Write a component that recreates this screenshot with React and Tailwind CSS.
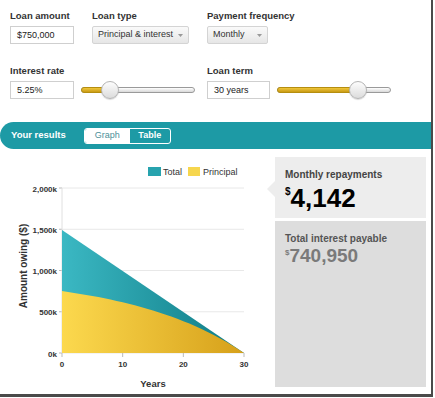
import React from 'react';

const P = 750000;
const r = 0.0525 / 12;
const n = 360;
const g = Math.pow(1 + r, n);
const pay = (P * r * g) / (g - 1);

const X = (t) => 62 + (t * 182) / 30;
const Y = (v) => 353 - (v / 2000000) * 165;

function Chart() {
  const years = Array.from({ length: 31 }, (_, i) => i);
  const principal = years.map((t) => {
    const k = t * 12;
    return (P * (g - Math.pow(1 + r, k))) / (g - 1);
  });
  const pPath =
    'M' + years.map((t, i) => `${X(t).toFixed(1)},${Y(principal[i]).toFixed(1)}`).join(' L') + ` L${X(30)},${Y(0)} L${X(0)},${Y(0)} Z`;
  const tPath = `M${X(0)},${Y(pay * n)} L${X(30)},${Y(0)} L${X(0)},${Y(0)} Z`;
  const ticks = [0, 500000, 1000000, 1500000, 2000000];
  const labels = ['0k', '500k', '1,000k', '1,500k', '2,000k'];

  return (
    <svg width="270" height="244" viewBox="0 149 270 244" className="shrink-0">
      <defs>
        <linearGradient id="gt" x1="0" x2="1" y1="0" y2="0">
          <stop offset="0" stopColor="#3bb8c3" />
          <stop offset="1" stopColor="#0e7a84" />
        </linearGradient>
        <linearGradient id="gp" x1="0" x2="1" y1="0" y2="0">
          <stop offset="0" stopColor="#fcd94e" />
          <stop offset="1" stopColor="#d6a01a" />
        </linearGradient>
      </defs>

      <rect x="148" y="167" width="13" height="9" fill="#27a3ae" />
      <text x="163" y="175" fontSize="9" fill="#333">Total</text>
      <rect x="188" y="167" width="12" height="9" fill="#f6d64e" />
      <text x="203" y="175" fontSize="9" fill="#333">Principal</text>

      {ticks.map((v, i) => (
        <g key={v}>
          <line x1="62" x2="244" y1={Y(v)} y2={Y(v)} stroke="#e8e8e8" strokeWidth="1" />
          <line x1="59" x2="62" y1={Y(v)} y2={Y(v)} stroke="#bbb" strokeWidth="1" />
          <text x="57" y={Y(v) + 3.5} fontSize="8" fontWeight="bold" fill="#333" textAnchor="end">
            {labels[i]}
          </text>
        </g>
      ))}
      <line x1="62" x2="62" y1={Y(2000000)} y2={Y(0)} stroke="#e0e0e0" />

      <path d={tPath} fill="url(#gt)" />
      <path d={pPath} fill="url(#gp)" />

      {[0, 10, 20, 30].map((t) => (
        <g key={t}>
          <line x1={X(t)} x2={X(t)} y1="353" y2="357" stroke="#bbb" />
          <text x={X(t)} y="367" fontSize="8" fontWeight="bold" fill="#333" textAnchor="middle">
            {t}
          </text>
        </g>
      ))}

      <text x="153" y="387" fontSize="9.5" fontWeight="bold" fill="#333" textAnchor="middle">
        Years
      </text>
      <text
        x="0"
        y="0"
        fontSize="10"
        fontWeight="bold"
        fill="#333"
        textAnchor="middle"
        transform="translate(26.5 266) rotate(-90)"
      >
        Amount owing ($)
      </text>
    </svg>
  );
}

function Label({ children }) {
  return <div className="h-[12px] text-[9.5px] leading-[12px] font-bold text-[#333] whitespace-nowrap">{children}</div>;
}

function Input({ value, w }) {
  return (
    <div className={`${w} mt-[4px] h-[18px] border border-[#cfcfcf] bg-white px-[6px] text-[9px] leading-[16px] text-[#222]`}>
      {value}
    </div>
  );
}

function Select({ value, w }) {
  return (
    <div
      className={`${w} mt-[4px] flex h-[18px] items-center justify-between rounded-[2px] border border-[#d4d4d4] bg-gradient-to-b from-[#fafafa] to-[#e6e6e6] pl-[5px] pr-[5px] text-[9px] text-[#333]`}
    >
      <span className="whitespace-nowrap">{value}</span>
      <svg width="5" height="3" viewBox="0 0 5 3">
        <path d="M0 0 L5 0 L2.5 3 Z" fill="#999" />
      </svg>
    </div>
  );
}

function Slider({ fill }) {
  return (
    <div className="relative mt-[16px] h-[18px] w-[114px]">
      <div className="absolute left-0 right-0 top-[6px] h-[6px] rounded-full border border-[#9a9a9a] bg-gradient-to-b from-[#ffffff] to-[#d8d8d8]" />
      <div
        className="absolute left-0 top-[6px] h-[6px] rounded-full border border-[#b58e10] bg-gradient-to-b from-[#f0c63a] to-[#c99b12]"
        style={{ width: fill + 2 }}
      />
      <div
        className="absolute top-0 h-[18px] w-[18px] rounded-full border border-[#b5b5b5] bg-gradient-to-b from-[#fdfdfd] to-[#dcdcdc] shadow-[0_1px_1px_rgba(0,0,0,0.15)]"
        style={{ left: fill - 9 }}
      />
    </div>
  );
}

export default function App() {
  return (
    <div className="h-[397px] w-[433px] border-r-[2px] border-b-[3px] border-[#4a4a4a] bg-white font-['Liberation_Sans',Arial,sans-serif]">
      <div className="h-[122px] pl-[10px] pt-[10px]">
        <div className="flex">
          <div className="w-[64px]">
            <Label>Loan amount</Label>
            <Input value="$750,000" w="w-[64px]" />
          </div>
          <div className="ml-[18px] w-[97px]">
            <Label>Loan type</Label>
            <Select value="Principal & interest" w="w-[97px]" />
          </div>
          <div className="ml-[18px] w-[61px]">
            <Label>Payment frequency</Label>
            <Select value="Monthly" w="w-[61px]" />
          </div>
        </div>
        <div className="mt-[21px] flex">
          <div className="w-[64px]">
            <Label>Interest rate</Label>
            <Input value="5.25%" w="w-[64px]" />
          </div>
          <div className="ml-[7px]">
            <Slider fill={29} />
          </div>
          <div className="ml-[12px] w-[63px]">
            <Label>Loan term</Label>
            <Input value="30 years" w="w-[63px]" />
          </div>
          <div className="ml-[7px]">
            <Slider fill={81} />
          </div>
        </div>
      </div>

      <div className="flex h-[27px] items-center rounded-l-full bg-[#1d9aa5] pl-[11px]">
        <span className="text-[9.5px] font-bold text-white">Your results</span>
        <div className="ml-[18px] flex h-[16px] overflow-hidden rounded-[3px] border border-white">
          <div className="flex w-[45px] items-center justify-center bg-white text-[9px] text-[#4d8f99]">Graph</div>
          <div className="flex w-[40px] items-center justify-center text-[9px] font-bold text-white">Table</div>
        </div>
      </div>

      <div className="flex">
        <Chart />
        <div className="ml-[5px] w-[151px] pt-[8px]">
          <div className="relative h-[61px] bg-[#ededed] pl-[10px] pt-[12px]">
            <div className="absolute left-[-8px] top-[24px] h-0 w-0 border-y-[8px] border-r-[8px] border-y-transparent border-r-[#ededed]" />
            <div className="text-[10px] leading-[12px] font-bold text-[#444]">Monthly repayments</div>
            <div className="mt-[3px] flex items-start font-bold text-black">
              <span className="mt-[3px] text-[10px] leading-[10px]">$</span>
              <span className="text-[26px] leading-[28px]">4,142</span>
            </div>
          </div>
          <div className="mt-[3px] h-[166px] bg-[#dddddd] pl-[10px] pt-[12px]">
            <div className="text-[10px] leading-[12px] font-bold text-[#555]">Total interest payable</div>
            <div className="mt-[1px] flex items-start font-bold text-[#7a7a7a]">
              <span className="mt-[3px] text-[8px] leading-[8px]">$</span>
              <span className="text-[19px] leading-[20px]">740,950</span>
            </div>
          </div>
        </div>
      </div>
    </div>
  );
}
